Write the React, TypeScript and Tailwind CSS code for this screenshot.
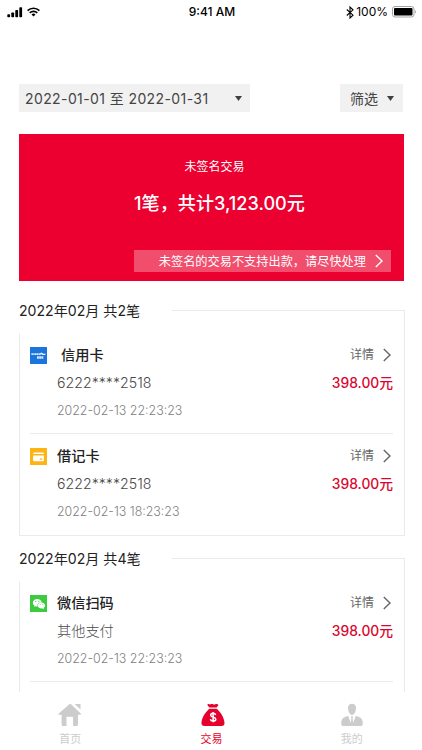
import type { ReactNode } from 'react';
import { AiFillWechat } from 'react-icons/ai';

interface Transaction {
    title: string;
    detail: string;
    time: string;
    icon: ReactNode;
    titleClass?: string;
}

function SignalIcon() {
    return (
        <svg width="16" height="11" viewBox="0 0 16 11" fill="#000">
            <rect x="0.3" y="7.3" width="2.8" height="2.9" rx="0.7" />
            <rect x="4.3" y="5.6" width="2.8" height="4.6" rx="0.7" />
            <rect x="8.3" y="3.1" width="2.8" height="7.1" rx="0.7" />
            <rect x="12.3" y="0.3" width="2.8" height="9.9" rx="0.7" />
        </svg>
    );
}

function WifiIcon() {
    return (
        <svg width="13" height="10" viewBox="0 0 13 10" fill="none" stroke="#000" strokeWidth="1.6">
            <path d="M0.6 3.6a8.4 8.4 0 0 1 11.8 0" />
            <path d="M2.7 5.9a5.4 5.4 0 0 1 7.6 0" />
            <path d="M6.5 9.4 4.5 7.4a2.9 2.9 0 0 1 4 0z" fill="#000" stroke="none" />
        </svg>
    );
}

function BluetoothIcon() {
    return (
        <svg width="8" height="13" viewBox="0 0 8 13" fill="none" stroke="#000" strokeWidth="1.1">
            <path d="M0.8 3.5 7 9.2 4 12V1l3 2.8L0.8 9.5" />
        </svg>
    );
}

function BatteryIcon() {
    return (
        <svg width="25" height="12" viewBox="0 0 25 12">
            <rect x="0.5" y="0.5" width="21.5" height="10.5" rx="2.5" fill="#fff" stroke="#a3a3a3" />
            <rect x="2" y="2" width="18.5" height="7.5" rx="1" fill="#000" />
            <path d="M23 4v3.6c1.2-.4 1.2-3.2 0-3.6z" fill="#a3a3a3" />
        </svg>
    );
}

function Caret() {
    return (
        <svg width="7" height="5" viewBox="0 0 7 5" fill="#404040">
            <path d="M0 0h7L3.5 5z" />
        </svg>
    );
}

function Chevron({ className }: { className?: string }) {
    return (
        <svg width="8" height="14" viewBox="0 0 8 14" fill="none" stroke="currentColor" strokeWidth="1.4" className={className}>
            <path d="M0.8 1 7 7 0.8 13" />
        </svg>
    );
}

function CreditIcon() {
    return (
        <svg width="17" height="17" viewBox="0 0 17 17" fill="none" stroke="#fff">
            <rect width="17" height="17" fill="#1b75dd" stroke="none" />
            <path d="M1.4 7.2h8.2" strokeWidth="1.8" strokeDasharray="1.5 0.3" opacity="0.85" />
            <path d="M9.4 7.6l2.1-1.4 1.3 1.1h2.6" strokeWidth="1.3" opacity="0.95" />
            <path d="M7 10.4h6.6" strokeWidth="2.5" strokeDasharray="1.9 0.3" opacity="0.85" />
        </svg>
    );
}

function DebitIcon() {
    return (
        <svg width="17" height="17" viewBox="0 0 17 17">
            <rect width="17" height="17" fill="#fdb515" />
            <path d="M4.5 4.5h8a1.4 1.4 0 0 1 1.4 1.6H3.1a1.4 1.4 0 0 1 1.4-1.6z" fill="#fff" />
            <path d="M3.1 7.6h10.8v4.3a1.3 1.3 0 0 1-1.3 1.3H4.4a1.3 1.3 0 0 1-1.3-1.3z" fill="#fff" />
            <path d="M9.8 11h2.6" stroke="#fdb515" strokeWidth="1.2" />
        </svg>
    );
}

function WechatIcon() {
    return (
        <div className="flex h-[17px] w-[17px] items-center justify-center bg-[#3acb3f]">
            <AiFillWechat className="h-[14px] w-[14px] text-white" />
        </div>
    );
}

function HomeIcon() {
    return (
        <svg width="24" height="24" viewBox="0 0 24 24" fill="currentColor">
            <path d="M11.6 1 0.8 10.4c-.5.5-.2 1.4.6 1.4h2.2v9.7c0 .9.6 1.5 1.5 1.5h3.4v-8.2c0-.6.4-1 1-1h4.6c.6 0 1 .4 1 1V23h3.4c.9 0 1.5-.6 1.5-1.5v-9.7h2.1c.8 0 1.1-.9.6-1.4L12.8 1a.9.9 0 0 0-1.2 0z" />
            <path d="M16.7 1h5.8v5.6z" />
        </svg>
    );
}

function MoneyBagIcon() {
    return (
        <svg width="24" height="24" viewBox="0 0 24 24" fill="currentColor">
            <path d="M8.4 4.6 6.7 2.4C6.2 1.6 6.7.9 7.5 1.1c.9.3 1.5.5 2.2.2.9-.5 1.5-.5 2.4-.1.8.4 1.5.4 2.2 0 .9-.4 1.5-.3 2.2 0 .8.3 1.1.7.6 1.3L15.7 4.6z" />
            <path d="M8.7 5.7h6.7c3 1.7 7.9 8.5 8.1 14 .1 2.2-.9 3.3-3 3.3H3.5c-2.1 0-3.1-1.1-3-3.3.2-5.5 5.2-12.3 8.2-14z" />
            <path
                d="M14.6 12.1c-.2-1.2-1.1-1.8-2.5-1.8s-2.4.7-2.4 1.9c0 2.6 5.1 1.4 5.1 4 0 1.2-1.1 1.9-2.7 1.9s-2.5-.7-2.7-1.9M12.1 9v10.3"
                fill="none"
                stroke="#fff"
                strokeWidth="1.5"
            />
        </svg>
    );
}

function PersonIcon() {
    return (
        <svg width="24" height="24" viewBox="0 0 24 24" fill="currentColor">
            <path d="M12 .8c2.6 0 4 1.9 4 4.3 0 3-1.6 7-4 7S8 8.1 8 5.1C8 2.7 9.4.8 12 .8z" />
            <path d="M8 12.7 3.9 14.4C2 15.3 1.2 17.7 1.2 20.4c0 1.8.9 2.6 2.6 2.6h16.4c1.7 0 2.6-.8 2.6-2.6 0-2.7-.8-5.1-2.7-6l-4.1-1.7-2.9 7-.5-5 .7-1.3h-2.6l.7 1.3-.5 5z" />
        </svg>
    );
}

function TransactionRow({ item }: { item: Transaction }) {
    return (
        <div className="flex h-[101px] pt-3">
            <div className="w-[27px] shrink-0 pt-0.5">{item.icon}</div>
            <div className="flex-1 whitespace-nowrap">
                <p className={`h-5 text-[14.2px] leading-5 font-medium text-[#222] ${item.titleClass ?? ''}`}>{item.title}</p>
                <p className="mt-2 h-5 text-[14.2px] leading-5 font-light text-[#4a4a4a]">{item.detail}</p>
                <p className="mt-2 h-5 text-[12.4px] leading-5 font-light text-[#808080]">{item.time}</p>
            </div>
            <div className="flex flex-col items-end">
                <div className="flex h-5 items-center pr-0.5 text-[12px] text-[#666]">
                    <span>详情</span>
                    <Chevron className="ml-[9px]" />
                </div>
                <p className="mt-2 h-5 text-[13.8px] leading-5 font-medium text-[#d9062f]">398.00元</p>
            </div>
        </div>
    );
}

function TransactionGroup({ title, items, hasMore }: { title: string; items: Transaction[]; hasMore?: boolean }) {
    return (
        <section>
            <div className="flex h-[34px]">
                <h2 className="w-[153px] text-[14.1px] leading-[24px] whitespace-nowrap text-[#222]">{title}</h2>
                <div className="mt-[11px] flex-1 border-t border-r border-[#ebebeb]" />
            </div>
            <div className="divide-y divide-[#ebebeb] border-x border-b border-[#ebebeb] pr-[11px] pl-[10px]">
                {items.map((item) => (
                    <TransactionRow key={item.title} item={item} />
                ))}
                {hasMore && <div className="h-[101px]" />}
            </div>
        </section>
    );
}

const creditAndDebit: Transaction[] = [
    { title: '信用卡', detail: '6222****2518', time: '2022-02-13 22:23:23', icon: <CreditIcon />, titleClass: 'pl-1' },
    { title: '借记卡', detail: '6222****2518', time: '2022-02-13 18:23:23', icon: <DebitIcon /> },
];

const scanPayments: Transaction[] = [
    { title: '微信扫码', detail: '其他支付', time: '2022-02-13 22:23:23', icon: <WechatIcon /> },
];

export default function App() {
    return (
        <div className="flex h-[750px] w-[422px] flex-col overflow-hidden bg-white font-[Inter,'Noto_Sans_CJK_SC',sans-serif]">
            <header className="grid h-6 shrink-0 grid-cols-3 items-center pr-[5px] pl-[7px] text-[12px] text-black">
                <div className="flex items-center gap-[4px]">
                    <SignalIcon />
                    <WifiIcon />
                </div>
                <span className="text-center font-medium">9:41 AM</span>
                <div className="flex items-center justify-end">
                    <BluetoothIcon />
                    <span className="mr-1 ml-0.5">100%</span>
                    <BatteryIcon />
                </div>
            </header>

            <main className="h-[668px] overflow-hidden pt-[60px] pr-[17px] pl-[19px]">
                <div className="flex justify-between pr-0.5 text-[14px] text-[#444]">
                    <button className="flex h-7 w-[231px] items-center justify-between bg-[#f1f1f1] pr-2 pl-1.5">
                        <span className="tracking-[0.4px] whitespace-nowrap">2022-01-01 至 2022-01-31</span>
                        <Caret />
                    </button>
                    <button className="flex h-7 w-[63px] items-center justify-between bg-[#f1f1f1] pr-[9px] pl-[10px]">
                        <span>筛选</span>
                        <Caret />
                    </button>
                </div>

                <section className="mt-[22px] flex h-[147px] w-[385px] flex-col items-center bg-[#eb002f] text-white">
                    <p className="mt-[23px] h-5 pl-[6px] text-[12px] leading-5">未签名交易</p>
                    <p className="mt-[14px] h-6 pl-4 text-[18.1px] leading-6 font-medium whitespace-nowrap">1笔，共计3,123.00元</p>
                    <div className="mt-[35px] mr-[13px] flex h-[22px] w-[257px] items-center justify-end self-end bg-white/30 pr-2 text-[12.2px]">
                        <span className="pt-0.5 whitespace-nowrap">未签名的交易不支持出款，请尽快处理</span>
                        <Chevron className="ml-[9px]" />
                    </div>
                </section>

                <div className="mt-[18px] flex flex-col gap-[11px]">
                    <TransactionGroup title="2022年02月 共2笔" items={creditAndDebit} />
                    <TransactionGroup title="2022年02月 共4笔" items={scanPayments} hasMore />
                </div>
            </main>

            <nav className="grid h-[58px] shrink-0 grid-cols-3 bg-white text-[11px] leading-4 text-[#ccc]">
                <div className="flex flex-col items-center pt-[11px]">
                    <HomeIcon />
                    <span className="mt-1">首页</span>
                </div>
                <div className="flex flex-col items-center pt-[11px] pl-px text-[#e6002d]">
                    <div className="pl-[3px]">
                        <MoneyBagIcon />
                    </div>
                    <span className="mt-1">交易</span>
                </div>
                <div className="flex flex-col items-center pt-[11px]">
                    <div className="pl-px">
                        <PersonIcon />
                    </div>
                    <span className="mt-1">我的</span>
                </div>
            </nav>
        </div>
    );
}
